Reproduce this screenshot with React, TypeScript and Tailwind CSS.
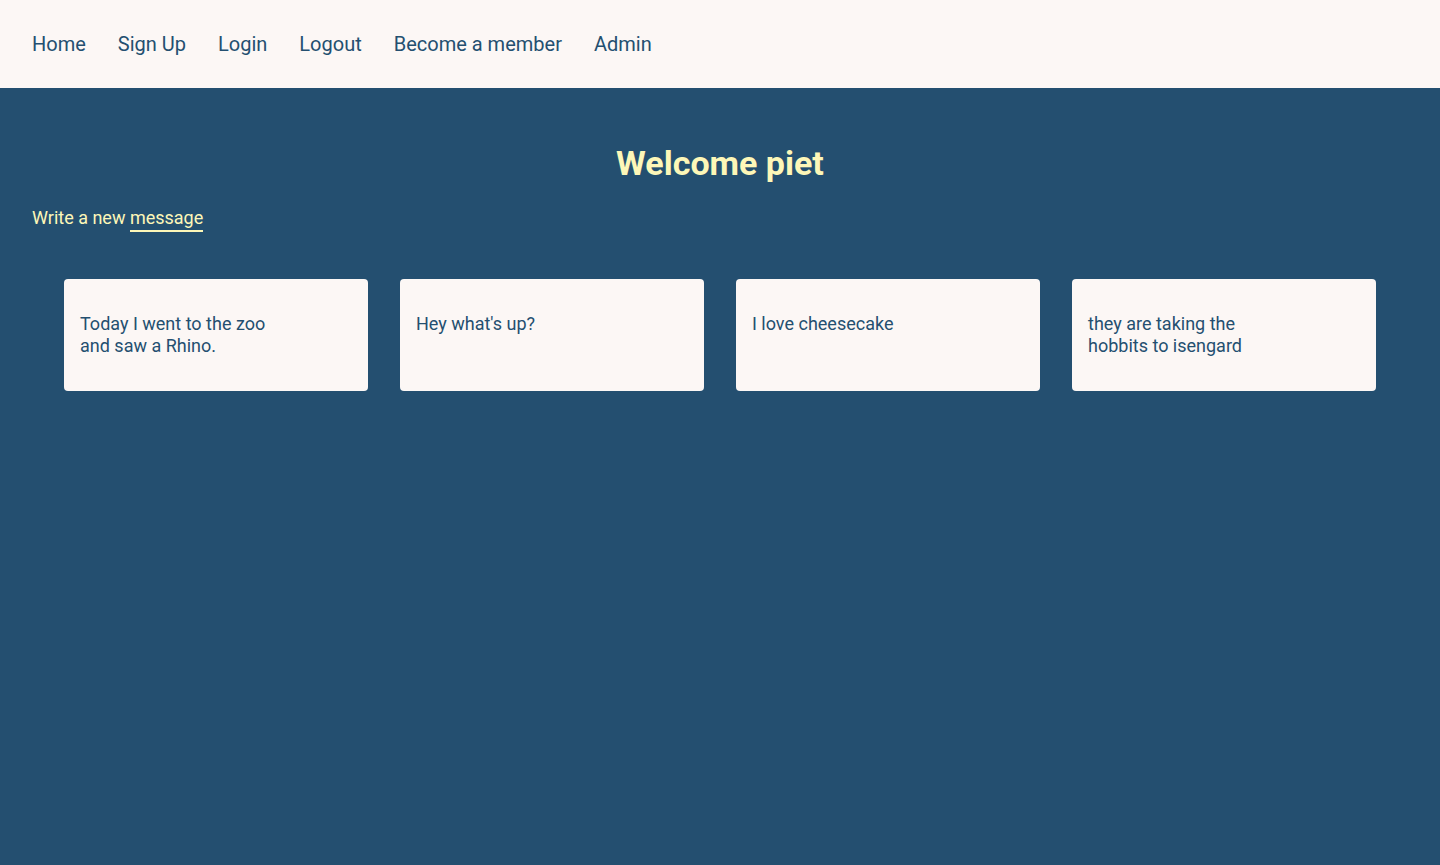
import React from "react";

interface Message {
  id: number;
  text: string;
}

const messages: Message[] = [
  { id: 1, text: "Today I went to the zoo and saw a Rhino." },
  { id: 2, text: "Hey what's up?" },
  { id: 3, text: "I love cheesecake" },
  { id: 4, text: "they are taking the hobbits to isengard" },
];

const links = ["Home", "Sign Up", "Login", "Logout", "Become a member", "Admin"];

const App: React.FC = () => {
  return (
    <div
      className="min-h-screen flex flex-col bg-[#244f70]"
      style={{ fontFamily: "Roboto, 'Liberation Sans', sans-serif" }}
    >
      <nav className="h-[88px] bg-[#fcf7f5] flex items-center px-8 gap-8">
        {links.map((l) => (
          <a key={l} href="#" className="text-[20px] text-[#244f70]">
            {l}
          </a>
        ))}
      </nav>

      <main className="flex flex-col px-8">
        <h1 className="mt-[53px] text-center text-[34px] font-bold leading-[44px] text-[#fdf7b8]">
          Welcome piet
        </h1>
        <p className="mt-[19px] text-[18px] leading-[28px] text-[#fdf7b8]">
          Write a new{" "}
          <a href="#" className="border-b-2 border-[#fdf7b8] pb-0.5">
            message
          </a>
        </p>

        {/* message cards */}
        <div className="mt-[47px] px-8 grid grid-cols-4 gap-8">
          {messages.map((m) => (
            <div
              key={m.id}
              className="h-[112px] rounded-[4px] bg-[#fcf7f5] px-4 pt-[34px]"
            >
              <p className="w-[200px] text-[18px] leading-[22px] text-[#244f70]">
                {m.text}
              </p>
            </div>
          ))}
        </div>
      </main>
    </div>
  );
};

export default App;
